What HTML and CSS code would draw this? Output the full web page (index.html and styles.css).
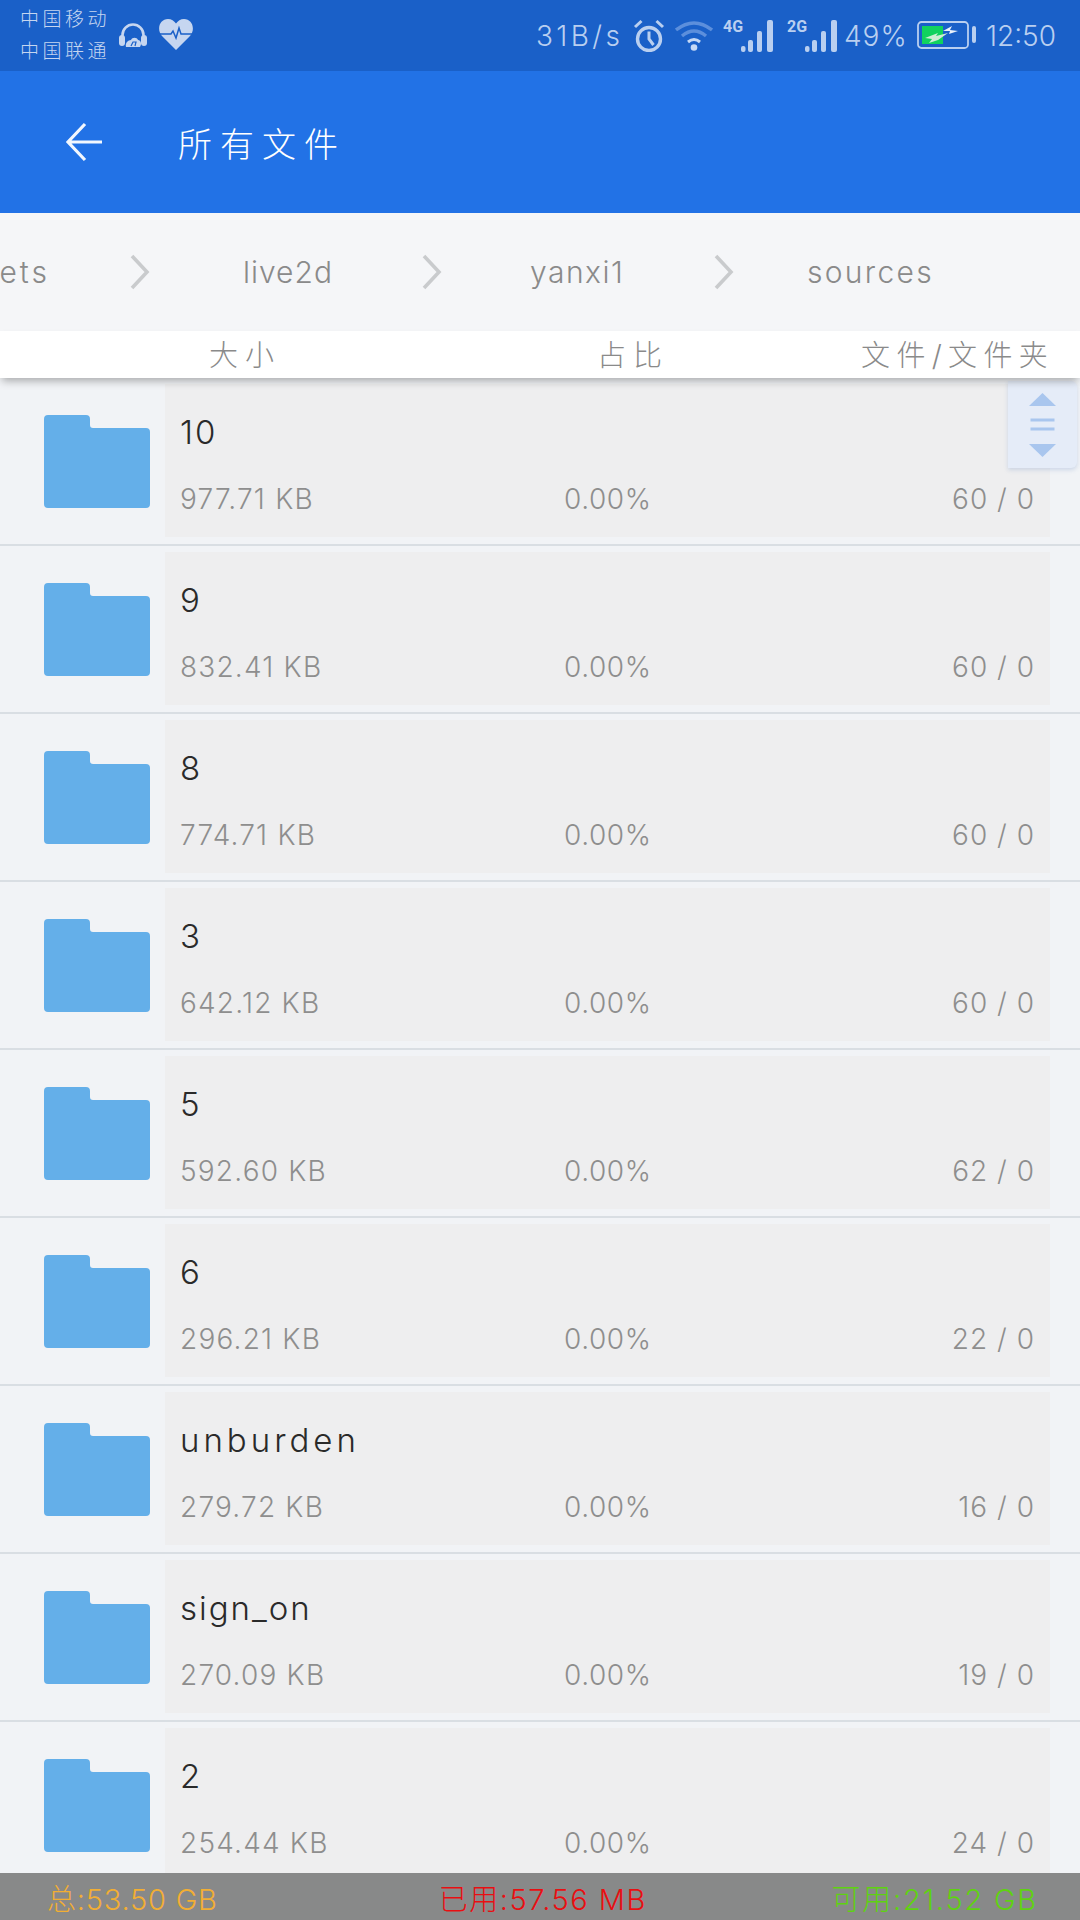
FILE: index.html
```html
<!DOCTYPE html>
<html lang="zh">
<head>
<meta charset="utf-8">
<title>所有文件</title>
<link rel="stylesheet" href="styles.css">
</head>
<body>
<div class="app">
  <header class="statusbar">
    <div class="status-left">
      <div class="carriers"><span>中国移动</span><span>中国联通</span></div>
      <svg class="ic-head" viewBox="0 0 28 25"><path d="M3.500 15v-3a10.500 10.500 0 0 1 21 0v3" fill="none" stroke="#c6d6f0" stroke-width="2.600"/><rect x="0" y="12" width="6" height="11" rx="3" fill="#c6d6f0"/><rect x="22" y="12" width="6" height="11" rx="3" fill="#c6d6f0"/><path d="M7 24c-1-4 2-7 5-7 1-3 6-3 7 0 3 0 4 4 2 7z" fill="#c6d6f0"/><path d="M12 23l2-4h3l-1 4" fill="none" stroke="#1a60c8" stroke-width="1.200"/></svg>
      <svg class="ic-heart" viewBox="0 0 34 31"><path d="M17 31 3 17C-3 10 1 0 9 0c3.500 0 6 2 8 4.500C19 2 21.500 0 25 0c8 0 12 10 6 17z" fill="#c6d6f0"/><path d="M0 15h12l2-3 3 7 3-10 2 6h12" fill="none" stroke="#1a60c8" stroke-width="1.500"/></svg>
    </div>
    <div class="status-right">
      <span class="st-speed">31B/s</span>
      <svg class="ic-alarm" viewBox="0 0 32 33"><circle cx="16" cy="20" r="11.500" fill="none" stroke="#b9cff0" stroke-width="3.400"/><path d="M16 12.500V20l4.500 6" fill="none" stroke="#b9cff0" stroke-width="3"/><path d="M2 8l6.500-6M30 8l-6.500-6" stroke="#b9cff0" stroke-width="3"/></svg>
      <svg class="ic-wifi" viewBox="0 0 38 30"><path d="M1 9Q19-5 37 9" fill="none" stroke="#5c8fdc" stroke-width="3.400"/><path d="M7 15Q19 5 31 15" fill="none" stroke="#5c8fdc" stroke-width="3.400"/><path d="M13 21Q19 16 25 21" fill="none" stroke="#c6d9f5" stroke-width="3"/><circle cx="19" cy="26.500" r="3.300" fill="#c6d9f5"/></svg>
      <div class="signal"><span class="sig-label">4G</span><svg class="ic-bars" viewBox="0 0 33 32"><g fill="#b9cff0"><rect x="0" y="26" width="4.500" height="6" rx="2"/><rect x="7" y="20" width="5" height="12" rx="2"/><rect x="16" y="11" width="5" height="21" rx="2"/><rect x="26" y="0" width="6" height="32" rx="2"/></g></svg></div>
      <div class="signal signal-b"><span class="sig-label">2G</span><svg class="ic-bars" viewBox="0 0 33 32"><g fill="#b9cff0"><rect x="0" y="26" width="4.500" height="6" rx="2"/><rect x="7" y="20" width="5" height="12" rx="2"/><rect x="16" y="11" width="5" height="21" rx="2"/><rect x="26" y="0" width="6" height="32" rx="2"/></g></svg></div>
      <span class="st-pct">49%</span>
      <svg class="ic-batt" viewBox="0 0 59 28"><rect x="1" y="1" width="50" height="26" rx="3.500" fill="none" stroke="#b9cff0" stroke-width="1.800"/><rect x="5" y="5" width="21" height="18" fill="#11d25e"/><path d="M8 17l13-5-2 3 12-3-10 7-9 3 3-4z" fill="#cdeed4"/><path d="M26 10l9-5-2 4 8 1-9 3 1-3z" fill="#eaf1fb"/><rect x="55" y="5" width="4" height="17" rx="2" fill="#b9cff0"/></svg>
      <span class="st-time">12:50</span>
    </div>
  </header>

  <div class="appbar">
    <svg class="ic-back" viewBox="0 0 40 40"><path d="M37 20H3M20 2 3 20l17 18" fill="none" stroke="#f2f7fe" stroke-width="3.200"/></svg>
    <h1 class="title">所有文件</h1>
  </div>

  <nav class="crumbs">
    <span class="crumb crumb-cut">ets</span>
    <svg class="chev" viewBox="0 0 20 36"><path d="M2 2l15 16L2 34" fill="none" stroke="#c9cbcd" stroke-width="3.600"/></svg>
    <span class="crumb crumb-live">live2d</span>
    <svg class="chev" viewBox="0 0 20 36"><path d="M2 2l15 16L2 34" fill="none" stroke="#c9cbcd" stroke-width="3.600"/></svg>
    <span class="crumb crumb-yanxi">yanxi1</span>
    <svg class="chev" viewBox="0 0 20 36"><path d="M2 2l15 16L2 34" fill="none" stroke="#c9cbcd" stroke-width="3.600"/></svg>
    <span class="crumb crumb-src">sources</span>
  </nav>

  <div class="colhead">
    <span class="col-size">大小</span>
    <span class="col-ratio">占比</span>
    <span class="col-count">文件/文件夹</span>
  </div>

  <main class="list">
    <article class="row"><svg class="folder" viewBox="0 0 106 93"><path d="M4 0h38a4 4 0 0 1 4 4v6a3 3 0 0 0 3 3h53a4 4 0 0 1 4 4v72a4 4 0 0 1-4 4H4a4 4 0 0 1-4-4V4a4 4 0 0 1 4-4z"/></svg><div class="info"><div class="name">10</div><div class="meta"><span class="size">977.71 KB</span><span class="ratio">0.00%</span><span class="count">60 / 0</span></div></div></article>
    <article class="row"><svg class="folder" viewBox="0 0 106 93"><path d="M4 0h38a4 4 0 0 1 4 4v6a3 3 0 0 0 3 3h53a4 4 0 0 1 4 4v72a4 4 0 0 1-4 4H4a4 4 0 0 1-4-4V4a4 4 0 0 1 4-4z"/></svg><div class="info"><div class="name">9</div><div class="meta"><span class="size">832.41 KB</span><span class="ratio">0.00%</span><span class="count">60 / 0</span></div></div></article>
    <article class="row"><svg class="folder" viewBox="0 0 106 93"><path d="M4 0h38a4 4 0 0 1 4 4v6a3 3 0 0 0 3 3h53a4 4 0 0 1 4 4v72a4 4 0 0 1-4 4H4a4 4 0 0 1-4-4V4a4 4 0 0 1 4-4z"/></svg><div class="info"><div class="name">8</div><div class="meta"><span class="size">774.71 KB</span><span class="ratio">0.00%</span><span class="count">60 / 0</span></div></div></article>
    <article class="row"><svg class="folder" viewBox="0 0 106 93"><path d="M4 0h38a4 4 0 0 1 4 4v6a3 3 0 0 0 3 3h53a4 4 0 0 1 4 4v72a4 4 0 0 1-4 4H4a4 4 0 0 1-4-4V4a4 4 0 0 1 4-4z"/></svg><div class="info"><div class="name">3</div><div class="meta"><span class="size">642.12 KB</span><span class="ratio">0.00%</span><span class="count">60 / 0</span></div></div></article>
    <article class="row"><svg class="folder" viewBox="0 0 106 93"><path d="M4 0h38a4 4 0 0 1 4 4v6a3 3 0 0 0 3 3h53a4 4 0 0 1 4 4v72a4 4 0 0 1-4 4H4a4 4 0 0 1-4-4V4a4 4 0 0 1 4-4z"/></svg><div class="info"><div class="name">5</div><div class="meta"><span class="size">592.60 KB</span><span class="ratio">0.00%</span><span class="count">62 / 0</span></div></div></article>
    <article class="row"><svg class="folder" viewBox="0 0 106 93"><path d="M4 0h38a4 4 0 0 1 4 4v6a3 3 0 0 0 3 3h53a4 4 0 0 1 4 4v72a4 4 0 0 1-4 4H4a4 4 0 0 1-4-4V4a4 4 0 0 1 4-4z"/></svg><div class="info"><div class="name">6</div><div class="meta"><span class="size">296.21 KB</span><span class="ratio">0.00%</span><span class="count">22 / 0</span></div></div></article>
    <article class="row"><svg class="folder" viewBox="0 0 106 93"><path d="M4 0h38a4 4 0 0 1 4 4v6a3 3 0 0 0 3 3h53a4 4 0 0 1 4 4v72a4 4 0 0 1-4 4H4a4 4 0 0 1-4-4V4a4 4 0 0 1 4-4z"/></svg><div class="info"><div class="name name-wide">unburden</div><div class="meta"><span class="size">279.72 KB</span><span class="ratio">0.00%</span><span class="count">16 / 0</span></div></div></article>
    <article class="row"><svg class="folder" viewBox="0 0 106 93"><path d="M4 0h38a4 4 0 0 1 4 4v6a3 3 0 0 0 3 3h53a4 4 0 0 1 4 4v72a4 4 0 0 1-4 4H4a4 4 0 0 1-4-4V4a4 4 0 0 1 4-4z"/></svg><div class="info"><div class="name">sign_on</div><div class="meta"><span class="size">270.09 KB</span><span class="ratio">0.00%</span><span class="count">19 / 0</span></div></div></article>
    <article class="row"><svg class="folder" viewBox="0 0 106 93"><path d="M4 0h38a4 4 0 0 1 4 4v6a3 3 0 0 0 3 3h53a4 4 0 0 1 4 4v72a4 4 0 0 1-4 4H4a4 4 0 0 1-4-4V4a4 4 0 0 1 4-4z"/></svg><div class="info"><div class="name">2</div><div class="meta"><span class="size">254.44 KB</span><span class="ratio">0.00%</span><span class="count">24 / 0</span></div></div></article>
    <div class="scroller">
      <svg viewBox="0 0 27 64"><path d="M13.500 0 27 13H0z" fill="#a9c6ee"/><path d="M1.500 27h24M1.500 36h24" stroke="#a9c6ee" stroke-width="3.200"/><path d="M0 51h27L13.500 64z" fill="#a9c6ee"/></svg>
    </div>
  </main>

  <footer class="totals">
    <span class="t-total">总:53.50 GB</span>
    <span class="t-used">已用:57.56 MB</span>
    <span class="t-free">可用:21.52 GB</span>
  </footer>
</div>
</body>
</html>
```
FILE: styles.css
```css
* { box-sizing: border-box; }
html, body { margin: 0; padding: 0; }
body { font-family: Inter, "Noto Sans CJK SC", sans-serif; font-weight: 300; }
.app { width: 1080px; height: 1920px; overflow: hidden; display: flex; flex-direction: column; background: #f1f3f6; position: relative; }

.statusbar { height: 71px; flex: none; background: #1a60c8; display: flex; justify-content: space-between; align-items: center; padding: 0 25px 0 20px; color: #b9cff0; }
.status-left { display: flex; align-items: center; }
.carriers { display: flex; flex-direction: column; font-size: 19px; line-height: 32px; color: #c6d6f0; width: 99px; letter-spacing: 3.5px; white-space: nowrap; }
.ic-head { width: 28px; height: 25px; margin-top: -1px; }
.ic-heart { width: 34px; height: 31px; margin: -2px 0 0 12px; }
.status-right { display: flex; align-items: center; height: 100%; font-size: 28px; }
.st-speed { width: 84px; letter-spacing: 3.4px; white-space: nowrap; }
.ic-alarm { width: 32px; height: 33px; margin-left: 13px; }
.ic-wifi { width: 38px; height: 30px; margin-left: 10px; }
.signal { display: flex; align-items: flex-end; width: 51px; height: 32px; margin-left: 10px; }
.signal-b { margin-left: 13px; }
.sig-label { width: 18px; flex: none; align-self: flex-start; font-family: "Liberation Sans Narrow", Roboto, sans-serif; font-size: 16px; font-weight: 700; line-height: 14px; white-space: nowrap; }
.ic-bars { width: 33px; height: 32px; flex: none; }
.st-pct { width: 62px; margin-left: 6px; letter-spacing: 1px; white-space: nowrap; }
.ic-batt { width: 59px; height: 28px; margin: -2px 0 0 11px; }
.st-time { width: 69px; margin-left: 10px; font-size: 28px; white-space: nowrap; }

.appbar { height: 142px; flex: none; background: #2272e6; display: flex; align-items: center; padding-left: 65px; }
.ic-back { width: 40px; height: 40px; flex: none; }
.title { margin: 0 0 0 73px; font-size: 34px; font-weight: 300; letter-spacing: 8px; color: #fff; }

.crumbs { height: 118px; flex: none; background: #f5f6f8; font-size: 30px; color: #8a8a8a; position: relative; }
.crumb { position: absolute; top: 50%; transform: translateY(-50%); white-space: nowrap; }
.crumb-cut { right: 1030px; letter-spacing: 3px; }
.crumb-live { left: 243px; letter-spacing: 1px; }
.crumb-yanxi { left: 530px; letter-spacing: 1.5px; }
.crumb-src { left: 807px; letter-spacing: 2.3px; }
.chev { position: absolute; top: 41px; width: 20px; height: 36px; }
.chev:nth-of-type(1) { left: 130px; }
.chev:nth-of-type(2) { left: 422px; }
.chev:nth-of-type(3) { left: 714px; }

.colhead { height: 47px; flex: none; background: #fff; position: relative; z-index: 2; box-shadow: 0 5px 8px -2px rgba(0,0,0,.3); font-size: 29px; letter-spacing: 7px; color: #8a8a8a; display: flex; align-items: center; padding: 0 26px 3px 209px; white-space: nowrap; }
.col-ratio { margin-left: 316px; }
.col-count { margin-left: auto; letter-spacing: 6.3px; }

.list { flex: 1; position: relative; overflow: hidden; min-height: 0; }
.row { height: 168px; display: flex; align-items: center; border-bottom: 2px solid #d9dee3; padding: 6px 30px 7px 44px; }
.folder { width: 106px; height: 93px; flex: none; fill: #64afe9; margin-right: 15px; margin-top: 2px; }
.info { flex: 1; height: 100%; background: #eeeeef; padding: 0 15px; display: flex; flex-direction: column; }
.name { font-size: 33px; color: #2a2a2a; margin-top: 28px; line-height: 40px; letter-spacing: 2px; }
.name-wide { letter-spacing: 4px; }
.meta { margin-top: auto; margin-bottom: 20px; display: grid; grid-template-columns: 384px 1fr auto; font-size: 28px; color: #8e8e8e; line-height: 36px; }
.size { letter-spacing: 1.200px; }
.ratio { letter-spacing: 0.600px; }
.count { letter-spacing: 1px; }

.scroller { position: absolute; top: 3px; right: 3px; width: 69px; height: 87px; background: #e5ecf8; border-radius: 0 6px 6px 0; box-shadow: 0 2px 4px rgba(120,150,200,.3); display: flex; align-items: center; justify-content: center; }
.scroller svg { width: 27px; height: 64px; }

.totals { height: 47px; flex: none; background: #888989; display: flex; align-items: center; padding: 0 42px 0 47px; font-size: 29px; white-space: nowrap; }
.t-total { color: #f2ae33; letter-spacing: .8px; }
.t-used { color: #e80f12; letter-spacing: 1.500px; margin-left: 221px; }
.t-free { color: #5fd211; letter-spacing: 1.800px; margin-left: auto; }
```
